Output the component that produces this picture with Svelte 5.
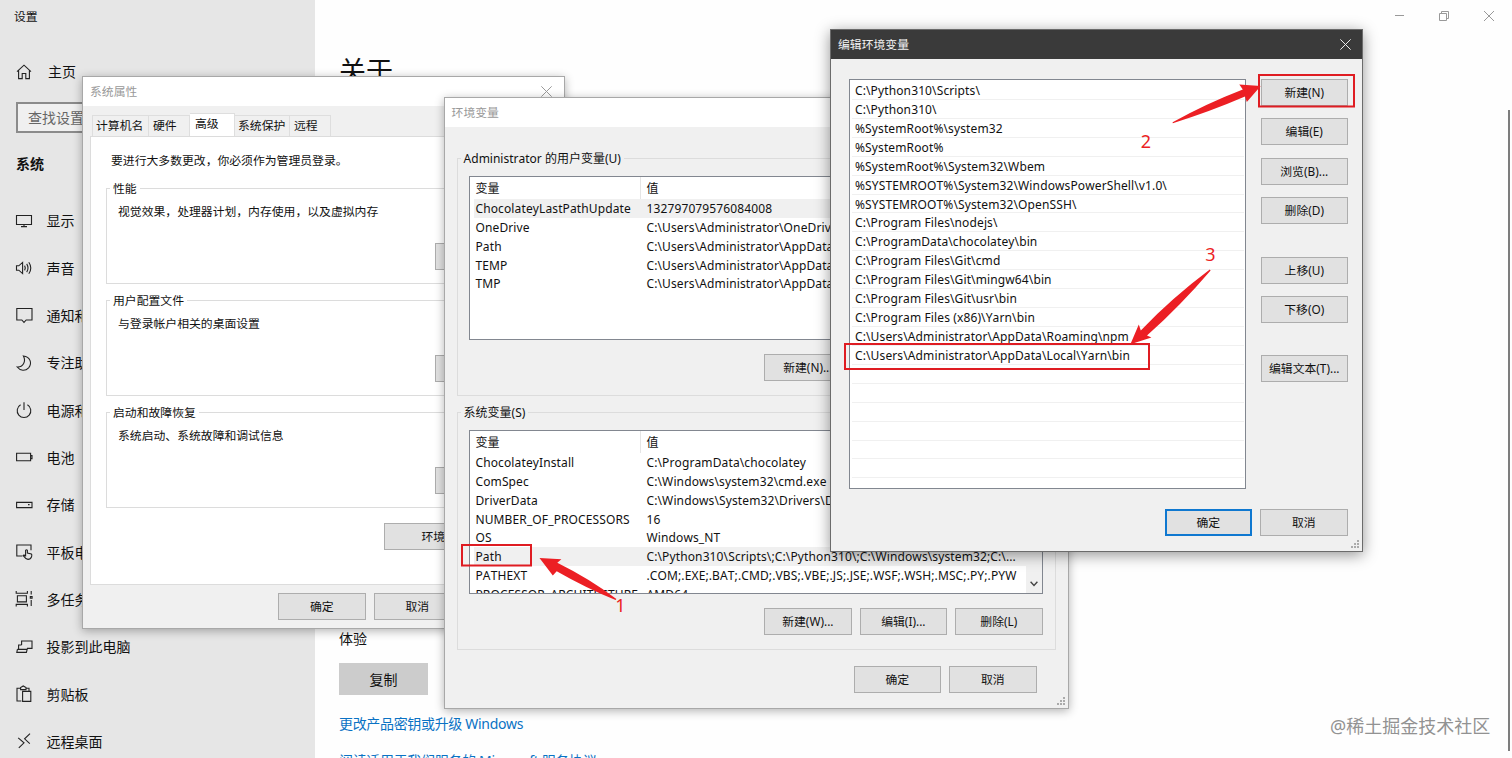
<script lang="ts">
	const navItems = [
		{ icon: 'display', label: '显示' },
		{ icon: 'sound', label: '声音' },
		{ icon: 'notify', label: '通知和操作' },
		{ icon: 'moon', label: '专注助手' },
		{ icon: 'power', label: '电源和睡眠' },
		{ icon: 'battery', label: '电池' },
		{ icon: 'storage', label: '存储' },
		{ icon: 'tablet', label: '平板电脑' },
		{ icon: 'tasks', label: '多任务处理' },
		{ icon: 'project', label: '投影到此电脑' },
		{ icon: 'clipboard', label: '剪贴板' },
		{ icon: 'remote', label: '远程桌面' }
	];

	const icons: Record<string, string> = {
		home: 'M3 9.6L10 3.2L17 9.6M4.6 8.4V16.6H8.2V11.5H11.8V16.6H15.4V8.4',
		display: 'M2.5 4.5H17.5V13.5H2.5ZM10 13.5V15.6M7 15.6H13',
		sound: 'M2.5 7.8H4.8L8.6 4.4V15.6L4.8 12.2H2.5ZM10.6 7.6Q12 10 10.6 12.4M12.7 5.9Q15.3 10 12.7 14.1M14.8 4.2Q18.8 10 14.8 15.8',
		notify: 'M2.8 3.5H18V15H12.2L10 17.4L7.8 15H2.8Z',
		moon: 'M9.4 3C16 3.6 18.6 10.2 14.6 14.8C11.4 18.2 6.2 18 3.2 14C8.8 14.4 12.4 8.6 9.4 3Z',
		power: 'M6.6 4.8A6.8 6.8 0 1 0 13.4 4.8M10 2.2V10',
		battery: 'M2.6 6.2H16.6V13.8H2.6ZM16.6 8.6H18V11.6H16.6',
		storage: 'M2.6 7.4H18V12.6H2.6ZM14 9.6H15.6',
		tablet: 'M8.4 14H2.8V3H17V8.2M11.6 14.6V8.4Q12.5 7.2 13.4 8.4V11L17.4 12Q18.2 12.6 17.6 14.6Q16.6 17.4 14 17.4Q11.8 17.2 9.2 13.6Q9.6 12.4 11.6 14',
		tasks: 'M2.2 2V4.2H13.4V2M3.4 6.7H12.4V12.9H3.4ZM2.2 17.4V15.4H13.4V17.4M17.2 2V5.6M17.2 11V17M16.3 7.6H18.1V9.2H16.3Z',
		project: 'M7.6 8V4H18V11.4H13M7.6 8H4.6V12.4M3.4 12.4H13.4M3.4 12.4L2.8 15.4H12.4L13.4 11.4',
		clipboard: 'M7.4 17H3V4.2H6.6M12 4.2H15V7M6.6 5.6V3.6L9.2 2L12 3.6V5.6ZM8.6 7.4H16.8V17.4H8.6Z',
		remote: 'M4.2 6.8L10 11.8L4.8 16.8M16 2.6L10.6 7.8L15.8 12.6'
	};

	const tabs = ['计算机名', '硬件', '高级', '系统保护', '远程'];

	const groups = [
		{ title: '性能', text: '视觉效果，处理器计划，内存使用，以及虚拟内存' },
		{ title: '用户配置文件', text: '与登录帐户相关的桌面设置' },
		{ title: '启动和故障恢复', text: '系统启动、系统故障和调试信息' }
	];

	const userVars = [
		['ChocolateyLastPathUpdate', '132797079576084008'],
		['OneDrive', 'C:\\Users\\Administrator\\OneDrive'],
		['Path', 'C:\\Users\\Administrator\\AppData\\Local\\Microsoft\\WindowsApps;'],
		['TEMP', 'C:\\Users\\Administrator\\AppData\\Local\\Temp'],
		['TMP', 'C:\\Users\\Administrator\\AppData\\Local\\Temp']
	];

	const systemVars = [
		['ChocolateyInstall', 'C:\\ProgramData\\chocolatey'],
		['ComSpec', 'C:\\Windows\\system32\\cmd.exe'],
		['DriverData', 'C:\\Windows\\System32\\Drivers\\DriverData'],
		['NUMBER_OF_PROCESSORS', '16'],
		['OS', 'Windows_NT'],
		['Path', 'C:\\Python310\\Scripts\\;C:\\Python310\\;C:\\Windows\\system32;C:\\...'],
		['PATHEXT', '.COM;.EXE;.BAT;.CMD;.VBS;.VBE;.JS;.JSE;.WSF;.WSH;.MSC;.PY;.PYW'],
		['PROCESSOR_ARCHITECTURE', 'AMD64']
	];

	const paths = [
		'C:\\Python310\\Scripts\\',
		'C:\\Python310\\',
		'%SystemRoot%\\system32',
		'%SystemRoot%',
		'%SystemRoot%\\System32\\Wbem',
		'%SYSTEMROOT%\\System32\\WindowsPowerShell\\v1.0\\',
		'%SYSTEMROOT%\\System32\\OpenSSH\\',
		'C:\\Program Files\\nodejs\\',
		'C:\\ProgramData\\chocolatey\\bin',
		'C:\\Program Files\\Git\\cmd',
		'C:\\Program Files\\Git\\mingw64\\bin',
		'C:\\Program Files\\Git\\usr\\bin',
		'C:\\Program Files (x86)\\Yarn\\bin',
		'C:\\Users\\Administrator\\AppData\\Roaming\\npm',
		'C:\\Users\\Administrator\\AppData\\Local\\Yarn\\bin'
	];

	// the list keeps drawing row lines below the last entry
	const pathRows = [...paths, ...Array(6).fill('')];
</script>

{#snippet icon(name: string)}
	<svg class="icon" viewBox="0 0 20 20"><path d={icons[name]} /></svg>
{/snippet}

{#snippet cross()}
	<svg class="cross" viewBox="0 0 10 10"><path d="M0.3 0.3L9.7 9.7M9.7 0.3L0.3 9.7" /></svg>
{/snippet}

{#snippet varTable(rows: string[][], selected: number)}
	<div class="row head"><span class="name">变量</span><span class="value">值</span></div>
	{#each rows as [name, value], i}
		<div class="row" class:selected={i === selected}>
			<span class="name">{name}</span>
			<span class="value">{value}</span>
		</div>
	{/each}
{/snippet}

<div class="desktop">
	<!-- Settings -->
	<aside class="sidebar">
		<div class="app-title">设置</div>
		<div class="nav-item home">{@render icon('home')}主页</div>
		<div class="search">查找设置</div>
		<h2>系统</h2>
		<nav>
			{#each navItems as item}
				<div class="nav-item">{@render icon(item.icon)}{item.label}</div>
			{/each}
		</nav>
	</aside>

	<main class="settings">
		<div class="caption-buttons">
			<svg viewBox="0 0 110 16"><path d="M5 7.5H14M49.5 5.5H56.5V12.5H49.5ZM51.5 5.5V3.5H58.5V10.5H56.5M94 3L104 13M104 3L94 13" /></svg>
		</div>
		<h1>关于</h1>
		<p class="experience">体验</p>
		<button class="copy">复制</button>
		<span class="link">更改产品密钥或升级 Windows</span>
		<span class="link">阅读适用于我们服务的 Microsoft 服务协议</span>
	</main>
	<div class="scroll-thumb"></div>

	<!-- System properties -->
	<section class="window system">
		<header>系统属性{@render cross()}</header>
		<div class="tabs">
			{#each tabs as tab}
				<div class="tab" class:active={tab === '高级'}>{tab}</div>
			{/each}
		</div>
		<div class="panel">
			<p class="notice">要进行大多数更改，你必须作为管理员登录。</p>
			{#each groups as group}
				<div class="group">
					<span class="legend">{group.title}</span>
					<p>{group.text}</p>
					<button>设置...</button>
				</div>
			{/each}
			<button class="env-button">环境变量(N)...</button>
		</div>
		<footer>
			<button>确定</button>
			<button>取消</button>
		</footer>
	</section>

	<!-- Environment variables -->
	<section class="window env">
		<header>环境变量</header>
		<div class="group user">
			<span class="legend">Administrator 的用户变量(U)</span>
			<div class="list">{@render varTable(userVars, 0)}</div>
			<div class="actions">
				<button>新建(N)...</button>
				<button>编辑(E)...</button>
				<button>删除(D)</button>
			</div>
		</div>
		<div class="group sys">
			<span class="legend">系统变量(S)</span>
			<div class="list">
				{@render varTable(systemVars, 5)}
				<div class="scrollbar">
					<svg viewBox="0 0 8 6"><path d="M0.6 0.8L4 4.4L7.4 0.8" /></svg>
				</div>
			</div>
			<div class="actions">
				<button>新建(W)...</button>
				<button>编辑(I)...</button>
				<button>删除(L)</button>
			</div>
		</div>
		<footer>
			<button>确定</button>
			<button>取消</button>
		</footer>
		<div class="grip"></div>
	</section>

	<!-- Edit environment variable -->
	<section class="window edit">
		<header>编辑环境变量{@render cross()}</header>
		<div class="edit-body">
			<div class="list">
				{#each pathRows as path}
					<div class="path-row">{path}</div>
				{/each}
			</div>
			<div class="side">
				<button>新建(N)</button>
				<button>编辑(E)</button>
				<button>浏览(B)...</button>
				<button>删除(D)</button>
				<button class="spaced">上移(U)</button>
				<button>下移(O)</button>
				<button class="spaced">编辑文本(T)...</button>
			</div>
		</div>
		<footer>
			<button class="default">确定</button>
			<button>取消</button>
		</footer>
		<div class="grip"></div>
	</section>

	<!-- Step markers -->
	<svg class="marks" viewBox="0 0 1512 758">
		<rect x="462" y="545" width="69" height="20.5" />
		<rect x="1259" y="75" width="95" height="31.5" />
		<rect x="845" y="344" width="304" height="25" />
		<path d="M539.5 558L561.4 559.3L557.3 562.8Q590 579 616.4 599L615.6 600Q586 588 556.7 571.2L552.8 575.6Z" />
		<path d="M1260.7 86L1239.3 84.4L1242.8 89.4Q1205 104 1172.6 122.2L1172.8 123.2Q1208 112.5 1245 96.6L1246.8 102Z" />
		<path d="M1130.4 344.3L1138.8 324.6L1140.8 330.4Q1172 298 1209.8 269.6L1210.6 270.4Q1181 305 1147 335.6L1151.4 337.4Z" />
		<text x="620.5" y="612">1</text>
		<text x="1146" y="147.5">2</text>
		<text x="1210.5" y="261">3</text>
	</svg>

	<div class="watermark">@稀土掘金技术社区</div>
</div>

<style>
	:global(body) {
		margin: 0;
		background: #fff;
	}

	.desktop {
		position: relative;
		display: flex;
		width: 1512px;
		height: 758px;
		overflow: hidden;
		background: #fefefe;
		color: #111;
		font: 12px/19px 'Noto Sans', 'Noto Sans CJK SC', sans-serif;
		font-kerning: none;
		white-space: nowrap;
	}

	.desktop * {
		box-sizing: border-box;
	}

	h1,
	h2,
	p {
		margin: 0;
		font-weight: 400;
	}

	button {
		width: 87.5px;
		height: 27px;
		flex: none;
		padding: 0;
		border: 1px solid #adadad;
		background: #e1e1e1;
		color: #111;
		font: inherit;
	}

	/* Settings */
	.sidebar {
		width: 315px;
		flex: none;
		background: #e6e6e6;
		font-size: 14px;
	}

	.app-title {
		height: 27px;
		padding: 6px 14px 0;
		font-size: 11.85px;
		line-height: 20px;
	}

	.nav-item {
		display: flex;
		align-items: center;
		gap: 13px;
		height: 47.35px;
		padding-left: 13.5px;
	}

	.nav-item.home {
		margin-top: 21px;
		gap: 14px;
		padding-left: 14px;
	}

	.icon {
		width: 20px;
		height: 20px;
		fill: none;
		stroke: #222;
		stroke-width: 1.1;
	}

	.search {
		width: 270px;
		height: 31px;
		margin: 7px 0 0 16px;
		padding-left: 10px;
		border: 2px solid #8b8b8b;
		background: #f0f0f0;
		color: #666;
		line-height: 27px;
	}

	h2 {
		margin: 20px 0 22.7px 16px;
		font-size: 14px;
		font-weight: 700;
		line-height: 21px;
	}

	.settings {
		display: flex;
		flex: 1;
		flex-direction: column;
		align-items: flex-start;
		padding-left: 24px;
		font-size: 14px;
	}

	.caption-buttons {
		display: flex;
		align-self: flex-end;
		height: 48px;
		flex: none;
		padding: 8px 12px 0 0;
	}

	.caption-buttons svg {
		width: 110px;
		height: 16px;
		fill: none;
		stroke: #999;
	}

	h1 {
		height: 581px;
		flex: none;
		font-size: 27px;
		line-height: 46px;
	}

	.experience {
		flex: none;
	}

	.copy {
		width: 89px;
		height: 32px;
		margin: 15px 0 17px;
		border: 0;
		background: #ccc;
		font-size: 14px;
	}

	.link {
		height: 37px;
		flex: none;
		color: #0a72c4;
		letter-spacing: -0.33px;
		line-height: 24px;
	}

	.scroll-thumb {
		position: absolute;
		left: 1508px;
		top: 110px;
		width: 2px;
		height: 641px;
		background: #7d7d7d;
	}

	/* Windows */
	.window {
		position: absolute;
		display: flex;
		flex-direction: column;
		border: 1px solid #a8a8a8;
		background: #f0f0f0;
		box-shadow: 0 2px 9px rgba(0, 0, 0, 0.3);
		font-size: 11.83px;
	}

	.window > header {
		display: flex;
		height: 29px;
		flex: none;
		justify-content: space-between;
		padding: 0 12px 0 7px;
		background: #fff;
		color: #999;
		line-height: 28px;
	}

	.cross {
		width: 11px;
		height: 11px;
		margin-top: 9px;
		fill: none;
		stroke: #999;
		stroke-width: 0.9;
	}

	.group {
		position: relative;
		border: 1px solid #dcdcdc;
	}

	.legend {
		position: absolute;
		top: -10px;
		left: 3px;
		padding: 0 3px;
		background: inherit;
		line-height: 19px;
	}

	.list {
		border: 1px solid #828790;
		background: #fff;
		font-size: 12px;
		letter-spacing: 0.12px;
		overflow: hidden;
	}

	.grip {
		position: absolute;
		right: 2px;
		bottom: 2px;
		width: 9px;
		height: 9px;
		background: radial-gradient(circle at 1px 1px, #aaa 1px, transparent 1.3px) 0 0 / 3px 3px;
		clip-path: polygon(100% 0, 100% 100%, 0 100%, 0 66%, 34% 66%, 34% 33%, 67% 33%, 67% 0);
	}

	/* System properties */
	.system {
		left: 82px;
		top: 76px;
		width: 483px;
		height: 553px;
	}

	.system .tabs {
		display: flex;
		height: 30px;
		flex: none;
		align-items: flex-end;
		padding-left: 9px;
	}

	.tab {
		width: 41px;
		height: 21px;
		padding-left: 4px;
		border: 1px solid #dedede;
		border-bottom: 0;
		border-left: 0;
	}

	.tab:first-child {
		width: 57px;
		padding-left: 3px;
		border-left: 1px solid #dedede;
	}

	.tab.active {
		width: 45px;
		height: 23px;
		padding-left: 5px;
		background: #fff;
	}

	.tab:nth-child(4) {
		width: 55px;
		padding-left: 3px;
	}

	.panel {
		display: flex;
		height: 449px;
		flex: none;
		flex-direction: column;
		margin: 0 7px;
		padding: 14px 15px 0;
		border: 1px solid #dcdcdc;
		background: #fff;
	}

	.notice {
		padding-left: 5px;
		margin-bottom: 18px;
	}

	.panel .group {
		display: flex;
		height: 96px;
		flex: none;
		flex-direction: column;
		justify-content: space-between;
		margin-bottom: 16px;
		padding: 13px 12px 13px 11px;
		background: #fff;
	}

	.panel .group button {
		align-self: flex-end;
		margin-right: 5.5px;
	}

	.env-button {
		width: 148px;
		align-self: flex-end;
		margin: -1px 9px 0 0;
	}

	.system footer {
		display: flex;
		gap: 8px;
		padding: 8px 0 0 195px;
	}

	/* Environment variables */
	.env {
		left: 443.6px;
		top: 97px;
		width: 625px;
		height: 612px;
	}

	.env .group {
		display: flex;
		height: 238px;
		flex: none;
		flex-direction: column;
		gap: 13.5px;
		margin: 31px 12px 0;
		padding: 17px 12px 0 11.4px;
		background: #f0f0f0;
	}

	.env .group.sys {
		margin-top: 16px;
	}

	.env .legend {
		font-size: 12px;
	}

	.env .list {
		position: relative;
		height: 164px;
		flex: none;
	}

	.row {
		display: flex;
		height: 18.93px;
		margin-left: 4px;
		line-height: 19.2px;
	}

	.row.head {
		height: 21.8px;
		line-height: 23px;
	}

	.row.selected {
		background: #f0f0f0;
	}

	.name {
		width: 167px;
		flex: none;
		padding-left: 1.5px;
	}

	.head .name {
		border-right: 1px solid #e5e5e5;
	}

	.value {
		padding-left: 5.5px;
	}

	.scrollbar {
		position: absolute;
		top: 0;
		right: 0;
		bottom: 0;
		display: flex;
		width: 16px;
		align-items: flex-end;
		justify-content: center;
		padding-bottom: 6px;
		background: #f0f0f0;
	}

	.scrollbar svg {
		width: 8px;
		height: 6px;
		fill: none;
		stroke: #444;
		stroke-width: 1.4;
	}

	.actions,
	.env footer,
	.edit footer {
		display: flex;
		justify-content: flex-end;
		gap: 8px;
	}

	.env footer {
		padding: 16px 31px 0 0;
	}

	/* Edit environment variable */
	.edit {
		left: 830px;
		top: 29px;
		width: 533px;
		height: 523px;
		border-color: #6b6b6b;
		box-shadow: 0 3px 14px rgba(0, 0, 0, 0.42);
	}

	.edit > header {
		padding-right: 11px;
		background: #3a3a3a;
		color: #f2f2f2;
		line-height: 29px;
	}

	.edit .cross {
		stroke: #eee;
	}

	.edit-body {
		display: flex;
		justify-content: space-between;
		padding: 20px 14px 0 18px;
	}

	.edit .list {
		width: 397px;
		height: 410px;
		padding: 1px 1px 0 2px;
	}

	.path-row {
		height: 18.93px;
		padding-left: 3px;
		border-bottom: 1px solid #f0f0f0;
		line-height: 19.4px;
	}

	.side {
		display: flex;
		flex-direction: column;
		gap: 12.4px;
	}

	.side .spaced {
		margin-top: 20px;
	}

	.edit footer {
		padding: 20px 14.4px 0 0;
	}

	.default {
		border: 2px solid #0f78d0;
	}

	/* Step markers */
	.marks {
		position: absolute;
		inset: 0;
		width: 1512px;
		height: 758px;
		fill: #ec1f24;
	}

	.marks rect {
		fill: none;
		stroke: #df1c22;
		stroke-width: 2;
	}

	.marks text {
		font-size: 18px;
		text-anchor: middle;
	}

	.watermark {
		position: absolute;
		top: 713px;
		left: 1330px;
		color: #929292;
		font-size: 18px;
		line-height: 26px;
	}
</style>
